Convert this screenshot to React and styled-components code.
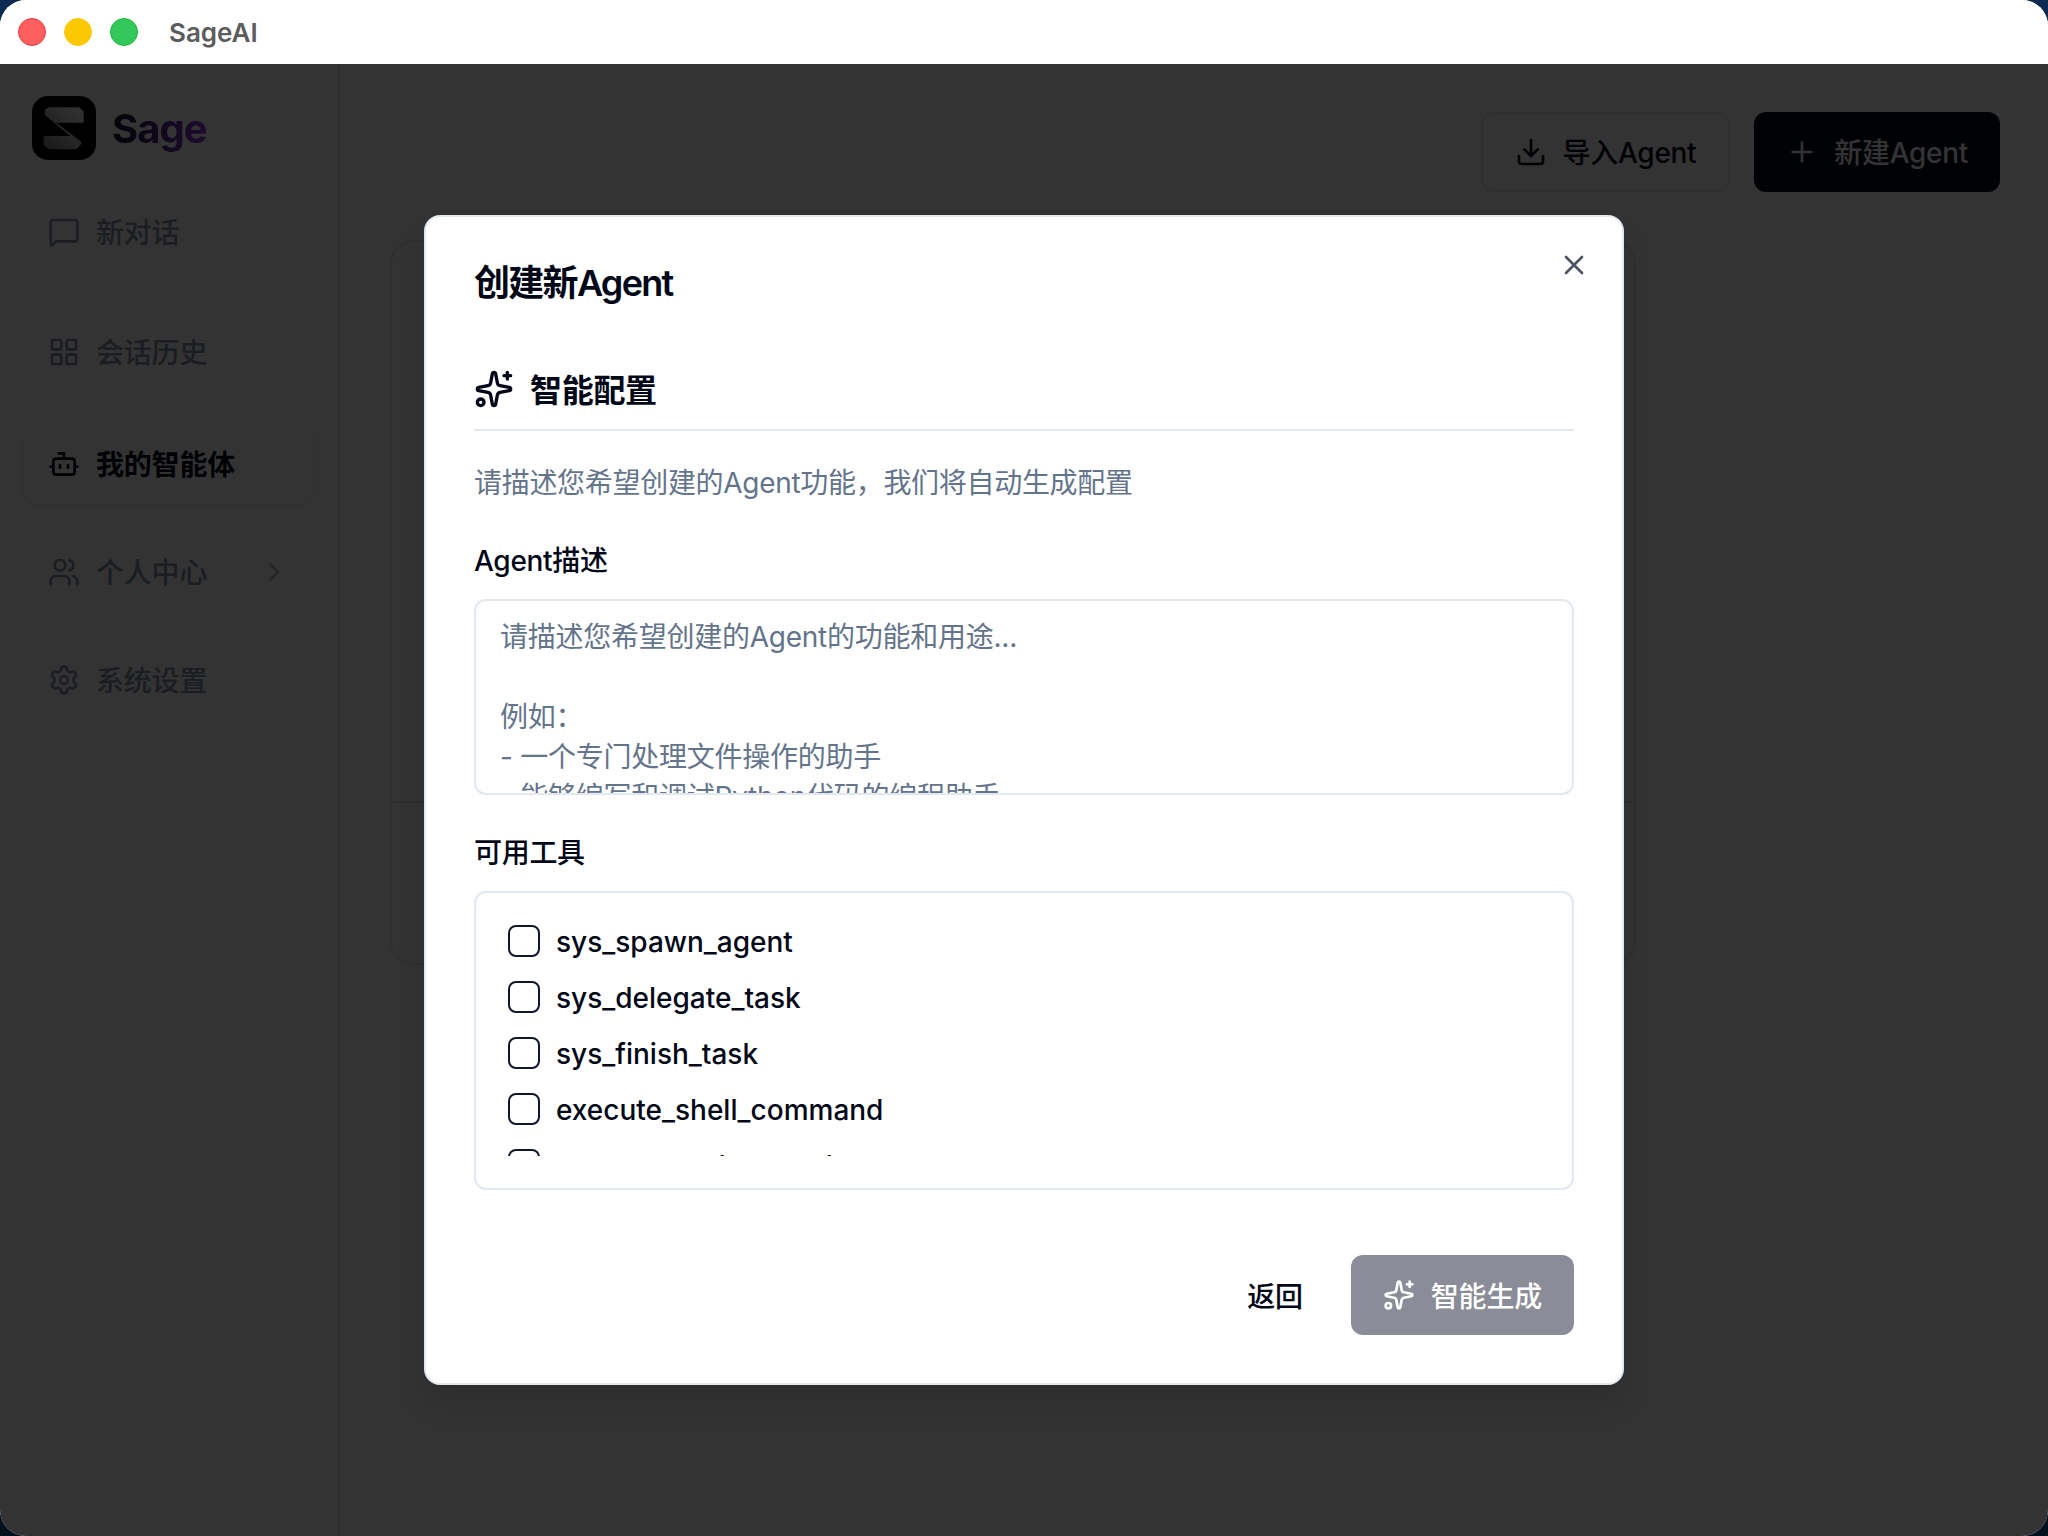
import React from 'react'
import styled, { createGlobalStyle } from 'styled-components'
import {
  Bot,
  ChevronRight,
  Download,
  LayoutGrid,
  MessageSquare,
  Plus,
  Settings,
  Sparkles,
  Users,
  X,
} from 'lucide-react'

const GlobalStyle = createGlobalStyle`
  html, body {
    margin: 0;
    padding: 0;
    background: linear-gradient(180deg, #0c2a52 0%, #03111e 100%);
  }
  * {
    box-sizing: border-box;
  }
  body {
    font-family: Inter, "Noto Sans CJK SC", sans-serif;
    color: #020817;
  }
`

const Window = styled.div`
  width: 2048px;
  height: 1536px;
  border-radius: 26px;
  overflow: hidden;
  display: flex;
  flex-direction: column;
  background: #fff;
`

const TitleBar = styled.header`
  height: 64px;
  flex: none;
  display: flex;
  align-items: center;
  padding-left: 18px;
  background: #fff;
`

const Light = styled.span`
  width: 28px;
  height: 28px;
  margin-right: 18px;
  border-radius: 50%;
  background: ${(props) => props.$color};
  border: 1px solid ${(props) => props.$edge};
`

const AppName = styled.span`
  margin-left: 13px;
  font-size: 26px;
  font-weight: 600;
  color: #5c5c5c;
`

const Main = styled.div`
  position: relative;
  flex: 1;
  display: flex;
  min-height: 0;
`

const Sidebar = styled.aside`
  width: 340px;
  flex: none;
  padding: 32px 24px 0;
  border-right: 2px solid #e2e8f0;
`

const Brand = styled.div`
  display: flex;
  align-items: center;
  gap: 16px;
  margin: 0 0 32px 8px;
`

const BrandName = styled.span`
  font-size: 40px;
  font-weight: 700;
  letter-spacing: -1px;
  background: linear-gradient(90deg, #0f172a, #9333ea);
  -webkit-background-clip: text;
  background-clip: text;
  color: transparent;
`

const NavItem = styled.div`
  height: 80px;
  margin-top: ${(props) => props.$top}px;
  display: flex;
  align-items: center;
  gap: 16px;
  padding: 0 24px;
  border-radius: 16px;
  font-size: 28px;
  letter-spacing: -0.2px;
  font-weight: ${(props) => (props.$active ? 700 : 500)};
  color: ${(props) => (props.$active ? '#020817' : '#8391a6')};
  background: ${(props) => (props.$active ? '#fff' : 'transparent')};
  box-shadow: ${(props) =>
    props.$active ? '0 2px 6px rgba(15, 23, 42, 0.1)' : 'none'};

  svg {
    flex: none;
    width: 32px;
    height: 32px;
  }
`

// lifts the CJK glyphs to where the icon's centre line sits
const RaisedLabel = styled.span`
  padding-bottom: 2px;
`

const NavArrow = styled(ChevronRight)`
  margin-left: auto;
  opacity: 0.6;
`

const Content = styled.main`
  flex: 1;
  padding: 48px 48px 0 50px;
`

const TopActions = styled.div`
  display: flex;
  justify-content: flex-end;
  gap: 24px;
`

const PageButton = styled.button`
  height: 80px;
  display: flex;
  align-items: center;
  gap: 16px;
  padding: 0 ${(props) => (props.$primary ? 30 : 32)}px;
  border-radius: 12px;
  border: 2px solid ${(props) => (props.$primary ? '#020817' : '#e2e8f0')};
  background: ${(props) => (props.$primary ? '#020817' : '#fff')};
  color: ${(props) => (props.$primary ? '#fff' : '#020817')};
  font: 500 28px Inter, "Noto Sans CJK SC", sans-serif;
  letter-spacing: -0.3px;
`

const AgentCard = styled.section`
  width: 1246px;
  height: 725px;
  margin-top: 48px;
  display: flex;
  flex-direction: column;
  justify-content: flex-end;
  border: 2px solid #e2e8f0;
  border-radius: 24px;
`

const CardFooter = styled.div`
  height: 162px;
  border-top: 2px solid #e2e8f0;
`

const Overlay = styled.div`
  position: absolute;
  inset: 0;
  display: flex;
  align-items: center;
  justify-content: center;
  background: rgba(0, 0, 0, 0.8);
`

const Modal = styled.div`
  position: relative;
  width: 1200px;
  padding: 48px;
  background: #fff;
  border: 2px solid #e2e8f0;
  border-radius: 16px;
  box-shadow: 0 20px 30px rgba(0, 0, 0, 0.1);
`

const CloseButton = styled.button`
  position: absolute;
  top: 32px;
  right: 32px;
  width: 32px;
  height: 32px;
  padding: 0;
  border: 0;
  background: none;
  color: #4b5563;
`

const ModalTitle = styled.h2`
  margin: 0;
  font-size: 36px;
  line-height: 36px;
  font-weight: 600;
  letter-spacing: -1.7px;
`

const SectionHead = styled.div`
  display: flex;
  align-items: center;
  gap: 16px;
  height: 66px;
  margin-top: 64px;
  padding-bottom: 16px;
  border-bottom: 2px solid #e2e8f0;
  font-size: 32px;
  font-weight: 600;
  letter-spacing: -0.3px;
`

const Hint = styled.p`
  margin: 32px 0 0;
  font-size: 28px;
  line-height: 40px;
  letter-spacing: -0.3px;
  color: #64748b;
`

const FieldLabel = styled.div`
  margin-top: ${(props) => props.$top}px;
  font-size: 28px;
  line-height: 28px;
  font-weight: 500;
  letter-spacing: -0.3px;
`

const DescriptionBox = styled.div`
  height: 196px;
  margin-top: 24px;
  padding: 16px 24px 0;
  border: 2px solid #e2e8f0;
  border-radius: 12px;
  overflow: hidden;
  white-space: pre-wrap;
  font-size: 28px;
  line-height: 40px;
  letter-spacing: -0.25px;
  color: #64748b;
`

const ToolBox = styled.div`
  margin-top: 24px;
  padding: 32px;
  border: 2px solid #e2e8f0;
  border-radius: 12px;
`

const ToolList = styled.div`
  height: 231px;
  overflow: hidden;
  display: flex;
  flex-direction: column;
  gap: 24px;
`

const ToolRow = styled.label`
  flex: none;
  height: 32px;
  display: flex;
  align-items: center;
  gap: 16px;
  font-size: 28px;
  font-weight: 500;
`

const ToolName = styled.span`
  padding-top: 2px;
`

const Checkbox = styled.span`
  flex: none;
  width: 32px;
  height: 32px;
  border: 2px solid #0f172a;
  border-radius: 8px;
`

const ModalFooter = styled.div`
  display: flex;
  justify-content: flex-end;
  gap: 16px;
  margin-top: 65px;
`

const FooterButton = styled.button`
  height: 80px;
  display: flex;
  align-items: center;
  gap: 16px;
  padding: 0 32px;
  border: 0;
  border-radius: 12px;
  background: ${(props) => (props.$primary ? '#8a8d97' : 'transparent')};
  color: ${(props) => (props.$primary ? '#fff' : '#020817')};
  font: 500 28px Inter, "Noto Sans CJK SC", sans-serif;
  letter-spacing: -0.2px;
`

const SageLogo = () => (
  <svg width="64" height="64" viewBox="0 0 64 64">
    <defs>
      <linearGradient id="sageMark" x1="1" y1="0" x2="0" y2="1">
        <stop offset="0" stopColor="#ffffff" />
        <stop offset="1" stopColor="#7f7f7f" />
      </linearGradient>
    </defs>
    <rect width="64" height="64" rx="16" fill="#000" />
    <path
      d="M17 11.3H47L51.7 15.7V26.7H24.3L49.3 45.7V48L44.3 53.3H17L11.7 49V40H38.3L12.7 19V14Z"
      fill="url(#sageMark)"
    />
  </svg>
)

const tools = [
  'sys_spawn_agent',
  'sys_delegate_task',
  'sys_finish_task',
  'execute_shell_command',
  'execute_python_code',
]

const placeholder = `请描述您希望创建的Agent的功能和用途...

例如：
- 一个专门处理文件操作的助手
- 能够编写和调试Python代码的编程助手`

const App = () => (
  <Window>
    <GlobalStyle />
    <TitleBar>
      <Light $color="#ff5f5f" $edge="#ee3b45" />
      <Light $color="#fdc700" $edge="#fdc700" />
      <Light $color="#34c759" $edge="#1ab83f" />
      <AppName>SageAI</AppName>
    </TitleBar>
    <Main>
      <Sidebar>
        <Brand>
          <SageLogo />
          <BrandName>Sage</BrandName>
        </Brand>
        <NavItem $top={0}>
          <MessageSquare />
          <RaisedLabel>新对话</RaisedLabel>
        </NavItem>
        <NavItem $top={40}>
          <LayoutGrid />
          <RaisedLabel>会话历史</RaisedLabel>
        </NavItem>
        <NavItem $top={32} $active>
          <Bot />
          <RaisedLabel>我的智能体</RaisedLabel>
        </NavItem>
        <NavItem $top={28}>
          <Users />
          <RaisedLabel>个人中心</RaisedLabel>
          <NavArrow />
        </NavItem>
        <NavItem $top={28}>
          <Settings />
          <RaisedLabel>系统设置</RaisedLabel>
        </NavItem>
      </Sidebar>
      <Content>
        <TopActions>
          <PageButton>
            <Download size={32} />
            <RaisedLabel>导入Agent</RaisedLabel>
          </PageButton>
          <PageButton $primary>
            <Plus size={32} />
            <RaisedLabel>新建Agent</RaisedLabel>
          </PageButton>
        </TopActions>
        <AgentCard>
          <CardFooter />
        </AgentCard>
      </Content>
      <Overlay>
        <Modal>
          <CloseButton>
            <X size={32} />
          </CloseButton>
          <ModalTitle>创建新Agent</ModalTitle>
          <SectionHead>
            <Sparkles size={40} />
            <RaisedLabel>智能配置</RaisedLabel>
          </SectionHead>
          <Hint>请描述您希望创建的Agent功能，我们将自动生成配置</Hint>
          <FieldLabel $top={44}>Agent描述</FieldLabel>
          <DescriptionBox>{placeholder}</DescriptionBox>
          <FieldLabel $top={44}>可用工具</FieldLabel>
          <ToolBox>
            <ToolList>
              {tools.map((tool) => (
                <ToolRow key={tool}>
                  <Checkbox />
                  <ToolName>{tool}</ToolName>
                </ToolRow>
              ))}
            </ToolList>
          </ToolBox>
          <ModalFooter>
            <FooterButton>返回</FooterButton>
            <FooterButton $primary>
              <Sparkles size={32} />
              智能生成
            </FooterButton>
          </ModalFooter>
        </Modal>
      </Overlay>
    </Main>
  </Window>
)

export default App
